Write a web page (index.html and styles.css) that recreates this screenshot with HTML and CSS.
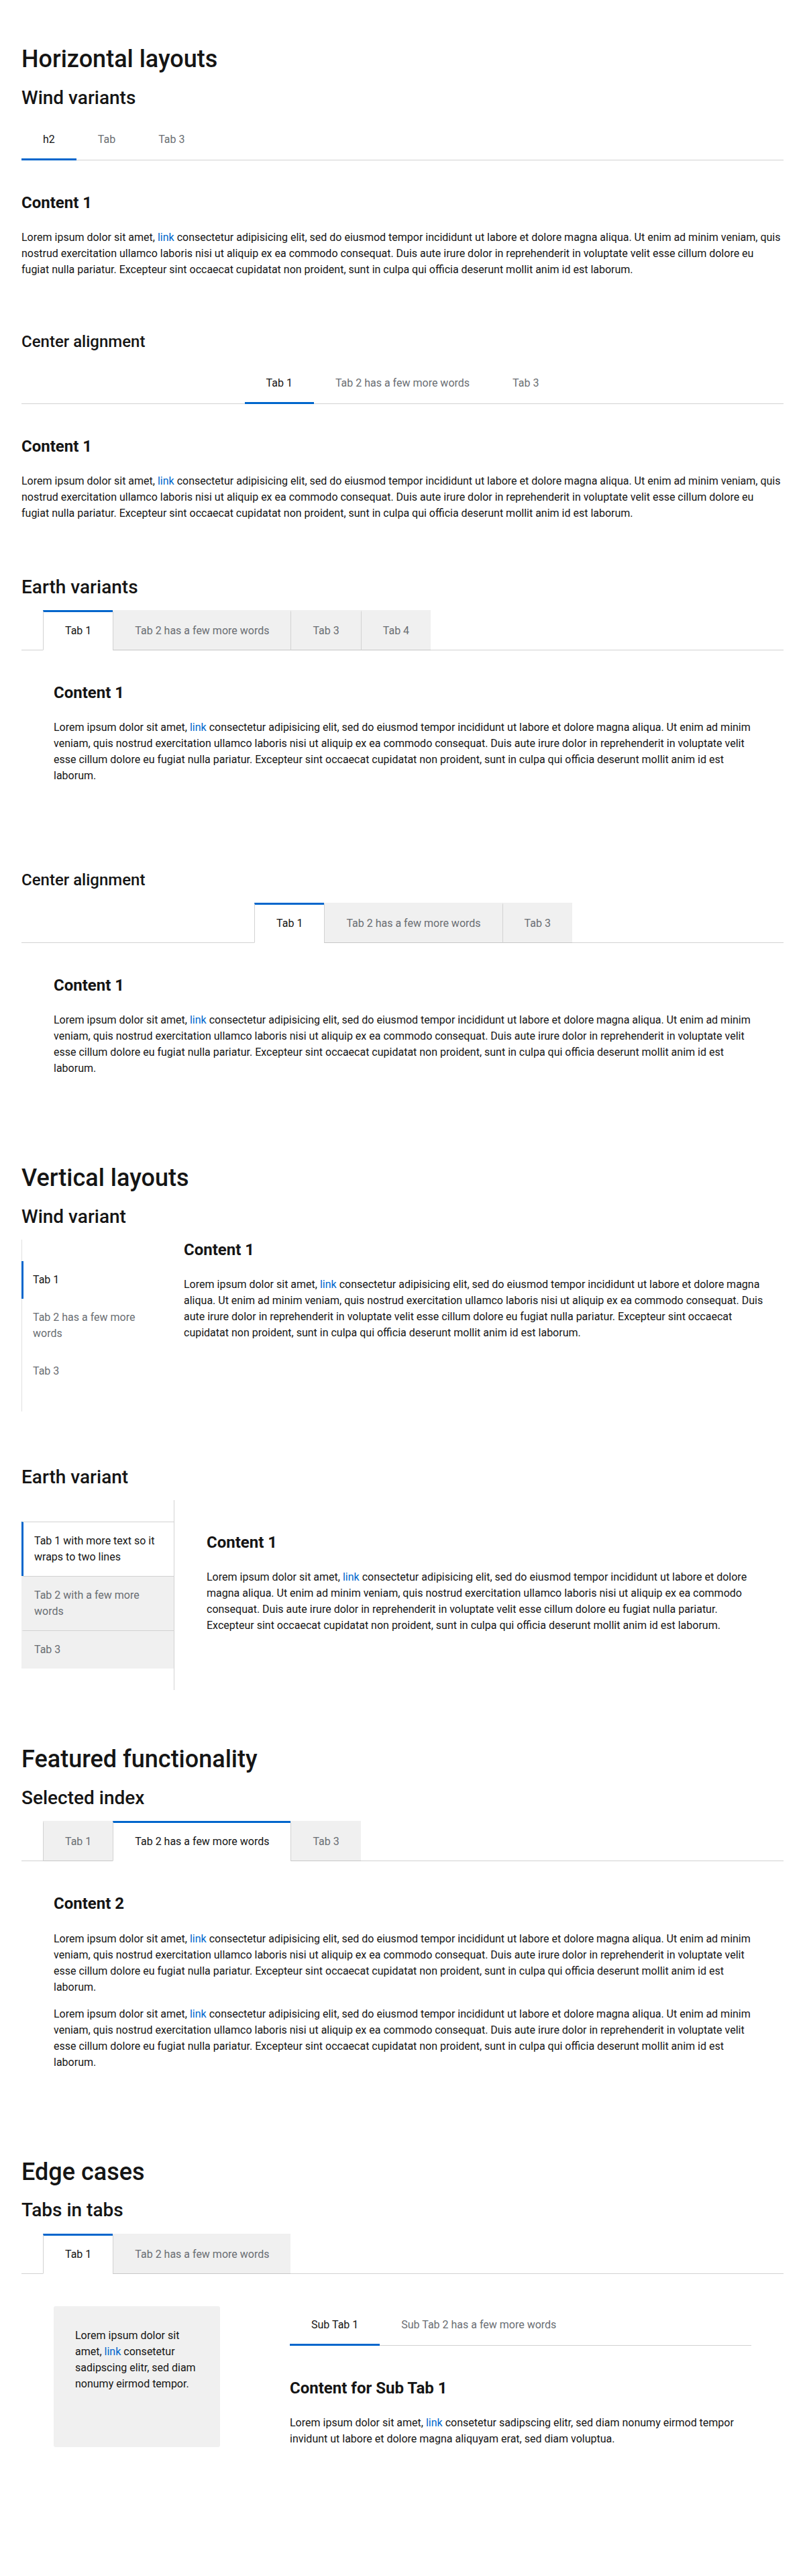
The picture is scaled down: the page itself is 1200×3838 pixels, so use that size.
FILE: index.html
```html
<!DOCTYPE html>
<html lang="en">
<head>
<meta charset="utf-8">
<title>Tabs demo</title>
<link rel="stylesheet" href="styles.css">
</head>
<body>
<main class="page">

  <h1>Horizontal layouts</h1>

  <section class="demo">
    <h2>Wind variants</h2>
    <div class="tabs wind">
      <div class="tablist" role="tablist">
        <button class="tab active" role="tab">h2</button>
        <button class="tab" role="tab">Tab</button>
        <button class="tab" role="tab">Tab 3</button>
      </div>
      <div class="panel wind-panel" role="tabpanel">
        <h3 class="content-title">Content 1</h3>
        <p>Lorem ipsum dolor sit amet, <a href="#">link</a> consectetur adipisicing elit, sed do eiusmod tempor incididunt ut labore et dolore magna aliqua. Ut enim ad minim veniam, quis nostrud exercitation ullamco laboris nisi ut aliquip ex ea commodo consequat. Duis aute irure dolor in reprehenderit in voluptate velit esse cillum dolore eu fugiat nulla pariatur. Excepteur sint occaecat cupidatat non proident, sunt in culpa qui officia deserunt mollit anim id est laborum.</p>
      </div>
    </div>
  </section>

  <section class="demo">
    <h3 class="demo-title">Center alignment</h3>
    <div class="tabs wind centered">
      <div class="tablist" role="tablist">
        <button class="tab active" role="tab">Tab 1</button>
        <button class="tab" role="tab">Tab 2 has a few more words</button>
        <button class="tab" role="tab">Tab 3</button>
      </div>
      <div class="panel wind-panel" role="tabpanel">
        <h3 class="content-title">Content 1</h3>
        <p>Lorem ipsum dolor sit amet, <a href="#">link</a> consectetur adipisicing elit, sed do eiusmod tempor incididunt ut labore et dolore magna aliqua. Ut enim ad minim veniam, quis nostrud exercitation ullamco laboris nisi ut aliquip ex ea commodo consequat. Duis aute irure dolor in reprehenderit in voluptate velit esse cillum dolore eu fugiat nulla pariatur. Excepteur sint occaecat cupidatat non proident, sunt in culpa qui officia deserunt mollit anim id est laborum.</p>
      </div>
    </div>
  </section>

  <section class="demo">
    <h2>Earth variants</h2>
    <div class="tabs earth">
      <div class="tablist" role="tablist">
        <button class="tab active" role="tab">Tab 1</button>
        <button class="tab" role="tab">Tab 2 has a few more words</button>
        <button class="tab" role="tab">Tab 3</button>
        <button class="tab" role="tab">Tab 4</button>
      </div>
      <div class="panel earth-panel" role="tabpanel">
        <h3 class="content-title">Content 1</h3>
        <p>Lorem ipsum dolor sit amet, <a href="#">link</a> consectetur adipisicing elit, sed do eiusmod tempor incididunt ut labore et dolore magna aliqua. Ut enim ad minim veniam, quis nostrud exercitation ullamco laboris nisi ut aliquip ex ea commodo consequat. Duis aute irure dolor in reprehenderit in voluptate velit esse cillum dolore eu fugiat nulla pariatur. Excepteur sint occaecat cupidatat non proident, sunt in culpa qui officia deserunt mollit anim id est laborum.</p>
      </div>
    </div>
  </section>

  <section class="demo">
    <h3 class="demo-title">Center alignment</h3>
    <div class="tabs earth centered">
      <div class="tablist" role="tablist">
        <button class="tab active" role="tab">Tab 1</button>
        <button class="tab" role="tab">Tab 2 has a few more words</button>
        <button class="tab" role="tab">Tab 3</button>
      </div>
      <div class="panel earth-panel" role="tabpanel">
        <h3 class="content-title">Content 1</h3>
        <p>Lorem ipsum dolor sit amet, <a href="#">link</a> consectetur adipisicing elit, sed do eiusmod tempor incididunt ut labore et dolore magna aliqua. Ut enim ad minim veniam, quis nostrud exercitation ullamco laboris nisi ut aliquip ex ea commodo consequat. Duis aute irure dolor in reprehenderit in voluptate velit esse cillum dolore eu fugiat nulla pariatur. Excepteur sint occaecat cupidatat non proident, sunt in culpa qui officia deserunt mollit anim id est laborum.</p>
      </div>
    </div>
  </section>

  <h1>Vertical layouts</h1>

  <section class="demo">
    <h2>Wind variant</h2>
    <div class="tabs vwind">
      <div class="tablist" role="tablist">
        <button class="tab active" role="tab">Tab 1</button>
        <button class="tab" role="tab">Tab 2 has a few more words</button>
        <button class="tab" role="tab">Tab 3</button>
      </div>
      <div class="panel vwind-panel" role="tabpanel">
        <h3 class="content-title">Content 1</h3>
        <p>Lorem ipsum dolor sit amet, <a href="#">link</a> consectetur adipisicing elit, sed do eiusmod tempor incididunt ut labore et dolore magna aliqua. Ut enim ad minim veniam, quis nostrud exercitation ullamco laboris nisi ut aliquip ex ea commodo consequat. Duis aute irure dolor in reprehenderit in voluptate velit esse cillum dolore eu fugiat nulla pariatur. Excepteur sint occaecat cupidatat non proident, sunt in culpa qui officia deserunt mollit anim id est laborum.</p>
      </div>
    </div>
  </section>

  <section class="demo">
    <h2>Earth variant</h2>
    <div class="tabs vearth">
      <div class="tablist" role="tablist">
        <button class="tab active" role="tab">Tab 1 with more text so it wraps to two lines</button>
        <button class="tab" role="tab">Tab 2 with a few more words</button>
        <button class="tab" role="tab">Tab 3</button>
      </div>
      <div class="panel vearth-panel" role="tabpanel">
        <h3 class="content-title">Content 1</h3>
        <p>Lorem ipsum dolor sit amet, <a href="#">link</a> consectetur adipisicing elit, sed do eiusmod tempor incididunt ut labore et dolore magna aliqua. Ut enim ad minim veniam, quis nostrud exercitation ullamco laboris nisi ut aliquip ex ea commodo consequat. Duis aute irure dolor in reprehenderit in voluptate velit esse cillum dolore eu fugiat nulla pariatur. Excepteur sint occaecat cupidatat non proident, sunt in culpa qui officia deserunt mollit anim id est laborum.</p>
      </div>
    </div>
  </section>

  <h1>Featured functionality</h1>

  <section class="demo">
    <h2>Selected index</h2>
    <div class="tabs earth">
      <div class="tablist" role="tablist">
        <button class="tab" role="tab">Tab 1</button>
        <button class="tab active" role="tab">Tab 2 has a few more words</button>
        <button class="tab" role="tab">Tab 3</button>
      </div>
      <div class="panel earth-panel" role="tabpanel">
        <h3 class="content-title">Content 2</h3>
        <p>Lorem ipsum dolor sit amet, <a href="#">link</a> consectetur adipisicing elit, sed do eiusmod tempor incididunt ut labore et dolore magna aliqua. Ut enim ad minim veniam, quis nostrud exercitation ullamco laboris nisi ut aliquip ex ea commodo consequat. Duis aute irure dolor in reprehenderit in voluptate velit esse cillum dolore eu fugiat nulla pariatur. Excepteur sint occaecat cupidatat non proident, sunt in culpa qui officia deserunt mollit anim id est laborum.</p>
        <p>Lorem ipsum dolor sit amet, <a href="#">link</a> consectetur adipisicing elit, sed do eiusmod tempor incididunt ut labore et dolore magna aliqua. Ut enim ad minim veniam, quis nostrud exercitation ullamco laboris nisi ut aliquip ex ea commodo consequat. Duis aute irure dolor in reprehenderit in voluptate velit esse cillum dolore eu fugiat nulla pariatur. Excepteur sint occaecat cupidatat non proident, sunt in culpa qui officia deserunt mollit anim id est laborum.</p>
      </div>
    </div>
  </section>

  <h1>Edge cases</h1>

  <section class="demo">
    <h2>Tabs in tabs</h2>
    <div class="tabs earth">
      <div class="tablist" role="tablist">
        <button class="tab active" role="tab">Tab 1</button>
        <button class="tab" role="tab">Tab 2 has a few more words</button>
      </div>
      <div class="panel earth-panel" role="tabpanel">
        <div class="nested">
          <div class="box">
            <p>Lorem ipsum dolor sit amet, <a href="#">link</a> consetetur sadipscing elitr, sed diam nonumy eirmod tempor.</p>
          </div>
          <div class="tabs wind sub">
            <div class="tablist" role="tablist">
              <button class="tab active" role="tab">Sub Tab 1</button>
              <button class="tab" role="tab">Sub Tab 2 has a few more words</button>
            </div>
            <div class="panel wind-panel" role="tabpanel">
              <h3 class="content-title">Content for Sub Tab 1</h3>
              <p>Lorem ipsum dolor sit amet, <a href="#">link</a> consetetur sadipscing elitr, sed diam nonumy eirmod tempor invidunt ut labore et dolore magna aliquyam erat, sed diam voluptua.</p>
            </div>
          </div>
        </div>
      </div>
    </div>
  </section>

</main>
</body>
</html>
```

FILE: styles.css
```css
* {
  box-sizing: border-box;
}

body {
  margin: 0;
  background: #ffffff;
  color: #151515;
  font-family: Roboto, "Liberation Sans", Arial, sans-serif;
  font-size: 16px;
  line-height: 1.5;
}

.page {
  padding: 65px 32px 66px;
}

h1 {
  font-size: 36px;
  font-weight: 500;
  line-height: 1.3;
  margin: 0 0 16px;
}

h2 {
  font-size: 28px;
  font-weight: 500;
  line-height: 1.3;
  margin: 0 0 16px;
}

.demo-title {
  font-size: 24px;
  font-weight: 500;
  line-height: 1.3;
  margin: 0 0 17px;
}

.content-title {
  font-size: 24px;
  font-weight: 700;
  line-height: 1.3;
  margin: 0 0 24px;
}

p {
  margin: 0 0 16px;
}

p:last-child {
  margin-bottom: 0;
}

a {
  color: #0066cc;
  text-decoration: none;
}

.demo {
  margin-bottom: 80px;
}

/* ---------- generic tabs ---------- */

.tablist {
  display: flex;
}

.tab {
  font: inherit;
  line-height: 24px;
  color: #6a6e73;
  background: none;
  border: 0;
  margin: 0;
  padding: 16px 32px;
  cursor: pointer;
  text-align: center;
  white-space: nowrap;
}

.tab.active {
  color: #151515;
}

.centered > .tablist {
  justify-content: center;
}

/* ---------- wind (horizontal) ---------- */

.wind > .tablist {
  border-bottom: 1px solid #d2d2d2;
}

.wind > .tablist > .tab {
  border-bottom: 3px solid transparent;
  margin-bottom: -1px;
}

.wind > .tablist > .tab.active {
  border-bottom-color: #0066cc;
}

.wind-panel {
  padding-top: 48px;
}

/* ---------- earth (horizontal) ---------- */

.earth > .tablist {
  padding-left: 32px;
  border-bottom: 1px solid #d2d2d2;
}

.earth > .tablist > .tab {
  background: #f0f0f0;
  border-top: 3px solid #f0f0f0;
  border-left: 1px solid #d2d2d2;
  border-bottom: 1px solid #c7c7c7;
  margin-bottom: -1px;
}

.earth > .tablist > .tab.active {
  background: #ffffff;
  border-top-color: #0066cc;
  border-bottom-color: #ffffff;
}

.earth-panel {
  padding: 48px;
}

/* ---------- wind (vertical) ---------- */

.vwind {
  display: flex;
  align-items: flex-start;
}

.vwind > .tablist {
  flex-direction: column;
  flex: 0 0 194px;
  border-left: 1px solid #e0e0e0;
  padding: 32px 0;
}

.vwind > .tablist > .tab {
  position: relative;
  padding: 16px;
  text-align: left;
  white-space: normal;
}

.vwind > .tablist > .tab.active::before {
  content: "";
  position: absolute;
  left: -1px;
  top: 0;
  bottom: 0;
  width: 3px;
  background: #0066cc;
}

.vwind-panel {
  flex: 1;
  padding: 0 16px 0 48px;
}

/* ---------- earth (vertical) ---------- */

.vearth {
  display: flex;
  align-items: flex-start;
}

.vearth > .tablist {
  flex-direction: column;
  flex: 0 0 228px;
  border-right: 1px solid #d2d2d2;
  padding: 32px 0;
}

.vearth > .tablist > .tab {
  padding: 16px;
  text-align: left;
  white-space: normal;
  background: #f0f0f0;
  border-top: 1px solid #d2d2d2;
  border-left: 3px solid #f0f0f0;
}

.vearth > .tablist > .tab.active {
  background: #ffffff;
  border-left-color: #0066cc;
}

.vearth-panel {
  flex: 1;
  padding: 48px;
}

/* ---------- nested ---------- */

.nested {
  display: grid;
  grid-template-columns: 248px 1fr;
  column-gap: 104px;
}

.box {
  background: #f0f0f0;
  border-radius: 3px;
  padding: 32px;
}
```
